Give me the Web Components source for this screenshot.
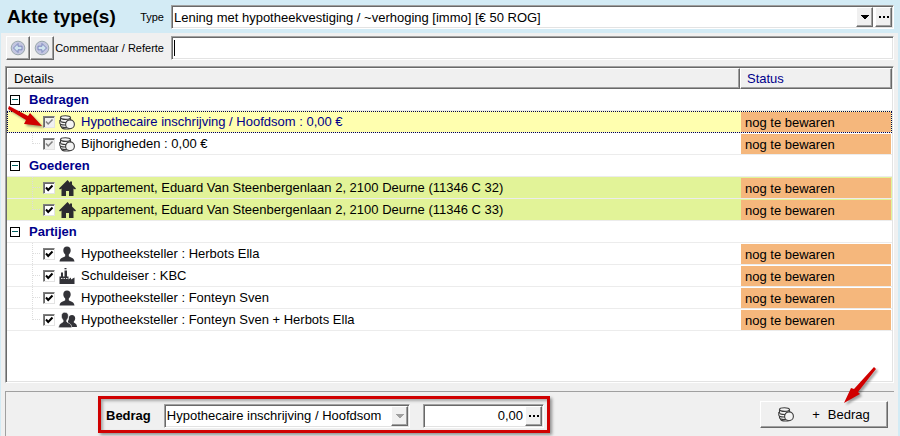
<!DOCTYPE html>
<html lang="nl">
<head>
<meta charset="utf-8">
<title>Akte type(s)</title>
<style>
  body {
    margin: 0;
    font-family: "Liberation Sans", Arial, sans-serif;
    font-size: 13px;
    color: #000;
    background: #d3ebf5;
  }
</style>
</head>
<body>
<akte-editor></akte-editor>

<script>
const ICONS = {
  coins: `<g fill="#f4f4f4" stroke="#3c3c3c" stroke-width="1.1">
      <path d="M2.500 11.500v1.500c0 1.200 2 2 5 2s5-.8 5-2v-1.500z"/>
      <path d="M1.500 9v2.500c0 1.200 2 2 5 2s5-.8 5-2V9z"/>
      <path d="M.8 6.500v2.500c0 1.200 2 2 5 2s5-.8 5-2V6.500z"/>
      <path d="M1.500 4v2.500c0 1.200 2 2 5 2s5-.8 5-2V4z"/>
      <ellipse cx="6.500" cy="3.600" rx="5" ry="1.800"/>
      <circle cx="11" cy="10.300" r="4.400"/></g>`,
  house: `<path fill="#2b2b2f" d="M8.500 0 0 8.500l1 1L2.500 8.500V16h4.500v-5h3v5h4.500V8.500l1.500 1 1-1L13 4.500V1.500h-2v1.300z"/>`,
  person: `<path fill="#333338" d="M8 .5c-2.300 0-3.700 1.500-3.700 3.700 0 2 .9 3.300 1.900 4.300v1.700C5.500 11.300.8 11.300.5 15.500h15c-.3-4.200-5-4.200-5.700-5.300V8.500c1-1 1.900-2.300 1.900-4.300C11.700 2 10.300.5 8 .5z"/>`,
  factory: `<path fill="#333338" d="M.5 16V8.500H2V4.500h2v4h1.500V2.500H8v6h1.500v3L12 9.500v2l3.500-2V16z"/>
      <path fill="#333338" d="M5.500 0h2v1.300h-2z"/>
      <path stroke="#ddd" d="M2 10.500h7" stroke-dasharray="1.500 1" fill="none"/>`,
  people: `<path fill="#333338" d="M13 3c2 0 3.200 1.300 3.200 3.300 0 1.500-.7 2.600-1.400 3.300v1c1 .8 3.200 1.200 3.200 4.400H9V9c.8-1 .8-2 .8-3 0-2 1.300-3 3.200-3z"/>
      <path fill="#333338" stroke="#fff" stroke-width=".6" d="M5.800.3C3.700.3 2.400 1.800 2.400 4c0 1.800.8 3.100 1.700 4v1.700C3.500 11-.3 11-.3 15.700h13c0-4.700-4.300-4.700-5-6V8c.9-.9 1.700-2.200 1.700-4C9.400 1.800 8 .3 5.800.3z"/>`,
  back: `<circle cx="8" cy="8" r="6.800" fill="#c3c6e0" stroke="#9aa8ac"/>
      <path d="M3.500 8 8 3.500v2.700h4v3.600H8v2.700z" fill="#cfe4ee" stroke="#7d86bd"/>`,
  forward: `<circle cx="8" cy="8" r="6.800" fill="#c3c6e0" stroke="#9aa8ac"/>
      <path d="M12.500 8 8 3.500v2.700H4v3.600h4v2.700z" fill="#cfe4ee" stroke="#7d86bd"/>`,
  down: `<path fill="currentColor" d="M4 6h8v1h-1v1h-1v1H9v1H7V9H6V8H5V7H4z"/>`,
  dots: `<path fill="currentColor" d="M3 7h2v2H3zM7 7h2v2H7zM11 7h2v2h-2z"/>`
};

// shared 3D edges
const BEVEL = `
  .sunken {
    border: 1px solid;
    border-color: #a0a0a0 #fff #fff #a0a0a0;
    box-shadow: inset 1px 1px #696969, inset -1px -1px #e3e3e3;
    padding: 1px;
    box-sizing: border-box;
  }
  .raised {
    border: 1px solid;
    border-color: #fff #696969 #696969 #fff;
    box-shadow: inset -1px -1px #a0a0a0;
    background: #f0f0f0;
    box-sizing: border-box;
  }
`;

class UiIcon extends HTMLElement {
  connectedCallback() {
    this.attachShadow({ mode: 'open' });
    this.shadowRoot.innerHTML = `
      <style>
        :host { display: inline-block; width: 16px; height: 16px; flex: none; }
        svg { display: block; overflow: visible; }
      </style>
      <svg width="16" height="16" viewBox="0 0 16 16" aria-hidden="true">${ICONS[this.getAttribute('name')]}</svg>
    `;
  }
}
customElements.define('ui-icon', UiIcon);

class BevelButton extends HTMLElement {
  connectedCallback() {
    const title = this.getAttribute('label');
    this.attachShadow({ mode: 'open' });
    this.shadowRoot.innerHTML = `
      <style>
        ${BEVEL}
        :host { display: block; flex: none; }
        button {
          display: flex;
          align-items: center;
          justify-content: center;
          width: 100%;
          height: 100%;
          padding: 0;
          font: inherit;
          color: inherit;
        }
      </style>
      <button type="button" class="raised" ${title ? `aria-label="${title}"` : ''}><slot></slot></button>
    `;
  }
}
customElements.define('bevel-button', BevelButton);

class LabelledField extends HTMLElement {
  connectedCallback() {
    const kind = this.getAttribute('kind');
    const label = this.getAttribute('label');
    const value = this.getAttribute('value') || '';
    const off = this.hasAttribute('disabled') ? 'off' : '';
    const control = kind === 'combo'
      ? `<select id="control"><option>${value}</option></select>
         <span class="arrow raised ${off}"><ui-icon name="down"></ui-icon></span>`
      : `<input id="control" type="text" value="${value}">`;
    this.attachShadow({ mode: 'open' });
    this.shadowRoot.innerHTML = `
      <style>
        ${BEVEL}
        :host { display: flex; align-items: center; }
        .lead {
          display: flex;
          align-items: center;
          flex: none;
          width: var(--lead-width, auto);
          margin-right: var(--lead-gap, 7px);
        }
        label {
          margin-left: auto;
          font-size: var(--label-size, 13px);
          font-weight: var(--label-weight, normal);
          white-space: nowrap;
        }
        .sunken {
          display: grid;
          grid-template-columns: 1fr auto auto;
          flex: 1;
          min-width: 0;
          height: 24px;
          background: #fff;
        }
        select, input {
          grid-row: 1;
          grid-column: 1 / 3;
          appearance: none;
          min-width: 0;
          border: 0;
          outline: 0;
          margin: 0;
          padding: 0 1px;
          background: none;
          font: inherit;
          color: inherit;
          text-align: var(--value-align, left);
        }
        input { grid-column: 1; padding-right: 2px; }
        input:focus {
          caret-color: transparent;
          background: linear-gradient(#000, #000) 1px center / 1px 16px no-repeat;
        }
        .arrow {
          grid-row: 1;
          grid-column: 2;
          width: 17px;
          display: flex;
          align-items: center;
          justify-content: center;
          pointer-events: none;
          overflow: hidden;
        }
        .off { color: #a0a0a0; }
      </style>
      <div class="lead"><slot name="lead"></slot><label for="control">${label}</label></div>
      <div class="sunken">${control}<slot name="action"></slot></div>
    `;
    if (this.hasAttribute('focused')) {
      this.shadowRoot.querySelector('input').focus();
    }
  }
}
customElements.define('labelled-field', LabelledField);

const GROUPS = [
  { name: 'Bedragen', rows: [
    { icon: 'coins', text: 'Hypothecaire inschrijving / Hoofdsom : 0,00 €', grey: true, cls: 'selected' },
    { icon: 'coins', text: 'Bijhorigheden : 0,00 €', grey: true }
  ] },
  { name: 'Goederen', rows: [
    { icon: 'house', text: 'appartement, Eduard Van Steenbergenlaan 2, 2100 Deurne (11346 C 32)', cls: 'goed' },
    { icon: 'house', text: 'appartement, Eduard Van Steenbergenlaan 2, 2100 Deurne (11346 C 33)', cls: 'goed' }
  ] },
  { name: 'Partijen', rows: [
    { icon: 'person', text: 'Hypotheeksteller : Herbots Ella' },
    { icon: 'factory', text: 'Schuldeiser : KBC' },
    { icon: 'person', text: 'Hypotheeksteller : Fonteyn Sven' },
    { icon: 'people', text: 'Hypotheeksteller : Fonteyn Sven + Herbots Ella' }
  ] }
];

class DetailList extends HTMLElement {
  connectedCallback() {
    const body = GROUPS.map((group, g) => `
      <tr>
        <td><div class="group"><button type="button" class="toggle" aria-label="${group.name}" aria-expanded="true"></button>${group.name}</div></td>
        <td></td>
      </tr>
      ${group.rows.map((row, r) => `
      <tr class="${row.cls || ''}">
        <td><div class="item">
          <span class="branch"></span>
          <input type="checkbox" id="row-${g}-${r}" checked ${row.grey ? 'disabled' : ''}>
          <ui-icon name="${row.icon}"></ui-icon>
          <label for="row-${g}-${r}">${row.text}</label>
        </div></td>
        <td><div class="status">nog te bewaren</div></td>
      </tr>`).join('')}
    `).join('');

    this.attachShadow({ mode: 'open' });
    this.shadowRoot.innerHTML = `
      <style>
        ${BEVEL}
        :host { display: flex; }
        .sunken { flex: 1; background: #fff; }
        table {
          width: 100%;
          border-collapse: separate;
          border-spacing: 0;
          table-layout: fixed;
        }
        th:last-child { width: 152px; color: #00008b; }
        th {
          height: 21px;
          padding: 0 6px;
          text-align: left;
          font-weight: normal;
        }
        td { height: 21px; padding: 0; border-bottom: 1px solid #ececec; white-space: nowrap; }
        .group, .item { display: flex; align-items: center; height: 21px; }
        .group { gap: 9px; padding-left: 3px; font-weight: bold; color: #00008b; }
        .toggle {
          width: 10px;
          height: 10px;
          padding: 0;
          border: 1px solid #000;
          background: linear-gradient(#006060, #006060) center / 6px 1px no-repeat #fff;
        }
        .branch {
          width: 8px;
          height: 21px;
          margin-left: 25px;
          border-left: 1px dotted #ddd;
          background: repeating-linear-gradient(90deg, #ddd 0 1px, transparent 1px 2px) 0 10px / 8px 1px no-repeat;
        }
        tr:nth-child(3) .branch, tr:nth-child(6) .branch, tr:last-child .branch { height: 11px; margin-bottom: 10px; }
        .selected .branch { visibility: hidden; }
        .item input {
          appearance: none;
          flex: none;
          width: 12px;
          height: 12px;
          margin: 0 4px 0 2px;
          border: 1px solid;
          border-color: #808080 #e3e3e3 #e3e3e3 #808080;
          box-shadow: inset 1px 1px #696969;
          background: url('data:image/svg+xml,<svg xmlns="http://www.w3.org/2000/svg" viewBox="0 0 10 10"><path d="M2 4.500 4.200 7 8.500 2.500" fill="none" stroke="black" stroke-width="2"/></svg>') #fff;
        }
        .item input:disabled {
          background: url('data:image/svg+xml,<svg xmlns="http://www.w3.org/2000/svg" viewBox="0 0 10 10"><path d="M2 4.500 4.200 7 8.500 2.500" fill="none" stroke="gray" stroke-width="1.5"/></svg>') #f0f0f0;
        }
        .item label { margin-left: 6px; }
        .status { height: 20px; line-height: 21px; margin: 0 1px; padding-left: 4px; background: #f5b77c; }
        .selected { background: #ffffaf; color: #00008b; outline: 1px dotted #000050; outline-offset: -1px; }
        .selected .status { color: #000; }
        .goed { background: #e2f398; }
      </style>
      <div class="sunken">
        <table>
          <thead><tr><th class="raised">Details</th><th class="raised">Status</th></tr></thead>
          <tbody>${body}</tbody>
        </table>
      </div>
    `;
  }
}
customElements.define('detail-list', DetailList);

class HintArrow extends HTMLElement {
  connectedCallback() {
    this.attachShadow({ mode: 'open' });
    this.shadowRoot.innerHTML = `
      <style>
        :host { display: block; pointer-events: none; }
        svg { display: block; overflow: visible; filter: drop-shadow(2px 2px 1px rgba(0,0,0,0.35)); }
      </style>
      <svg width="36" height="36" aria-hidden="true"><path fill="#d00000" d="${this.getAttribute('shape')}"/></svg>
    `;
  }
}
customElements.define('hint-arrow', HintArrow);

class AkteEditor extends HTMLElement {
  connectedCallback() {
    this.attachShadow({ mode: 'open' });
    this.shadowRoot.innerHTML = `
      <style>
        :host {
          display: flex;
          flex-direction: column;
          position: relative;
          min-height: 100vh;
          --lead-width: 158px;
        }
        header { padding: 5px 6px 4px; }
        .top { --label-size: 11px; }
        h1 { margin: 0; padding-left: 1px; font-size: 19px; line-height: 24px; white-space: nowrap; }
        main {
          display: flex;
          flex-direction: column;
          flex: 1;
          margin: 0 2px 0 1px;
          padding: 3px 4px 0;
          background: #f0f0f0;
        }
        main .top { padding-left: 1px; }
        .nav { width: 24px; height: 24px; }
        .more { width: 17px; height: 20px; }
        .top .more { margin-left: 2px; }
        detail-list { flex: 1; margin: 6px 0 8px; }
        footer {
          display: flex;
          align-items: center;
          justify-content: space-between;
          height: 45px;
          box-sizing: border-box;
          padding: 0 6px 0 92px;
          border-top: 1px solid #a0a0a0;
          border-left: 1px solid #a0a0a0;
        }
        .amount {
          display: flex;
          gap: 13px;
          padding: 5px 3px 2px 5px;
          border: 3px solid #d00000;
          box-shadow: 2px 2px 3px rgba(0,0,0,0.4), inset 2px 2px 3px rgba(0,0,0,0.3);
          --label-weight: bold;
          --lead-width: auto;
        }
        .kind { width: 304px; --lead-gap: 13px; }
        .value { width: 121px; --lead-gap: 0px; --label-size: 0px; --value-align: right; }
        .add { width: 128px; height: 27px; }
        .add ui-icon { margin-right: 18px; }
        .add span { margin-right: 8px; }
        .hint-row { position: absolute; left: 8px; top: 106px; }
        .hint-add { position: absolute; right: 22px; bottom: 34px; }
      </style>
      <header>
        <labelled-field class="top" kind="combo" label="Type" value="Lening met hypotheekvestiging / ~verhoging [immo] [€ 50 ROG]">
          <h1 slot="lead">Akte type(s)</h1>
          <bevel-button slot="action" class="more" label="Type kiezen"><ui-icon name="dots"></ui-icon></bevel-button>
        </labelled-field>
      </header>
      <main>
        <labelled-field class="top" kind="text" label="Commentaar / Referte" focused>
          <bevel-button slot="lead" class="nav" label="Vorige"><ui-icon name="back"></ui-icon></bevel-button>
          <bevel-button slot="lead" class="nav" label="Volgende"><ui-icon name="forward"></ui-icon></bevel-button>
        </labelled-field>
        <detail-list></detail-list>
        <footer>
          <div class="amount">
            <labelled-field class="kind" kind="combo" label="Bedrag" value="Hypothecaire inschrijving / Hoofdsom" disabled></labelled-field>
            <labelled-field class="value" kind="text" label="" value="0,00">
              <bevel-button slot="action" class="more" label="Bedrag kiezen"><ui-icon name="dots"></ui-icon></bevel-button>
            </labelled-field>
          </div>
          <bevel-button class="add"><ui-icon name="coins"></ui-icon><span>+</span> Bedrag</bevel-button>
        </footer>
      </main>
      <hint-arrow class="hint-row" shape="M1 0 20 10 22 7 34 20 16 18 18 14 0 3z"></hint-arrow>
      <hint-arrow class="hint-add" shape="M32 1 34 3 16 26 18 28 2 37 9 22 12 23z"></hint-arrow>
    `;
  }
}
customElements.define('akte-editor', AkteEditor);
</script>
</body>
</html>
